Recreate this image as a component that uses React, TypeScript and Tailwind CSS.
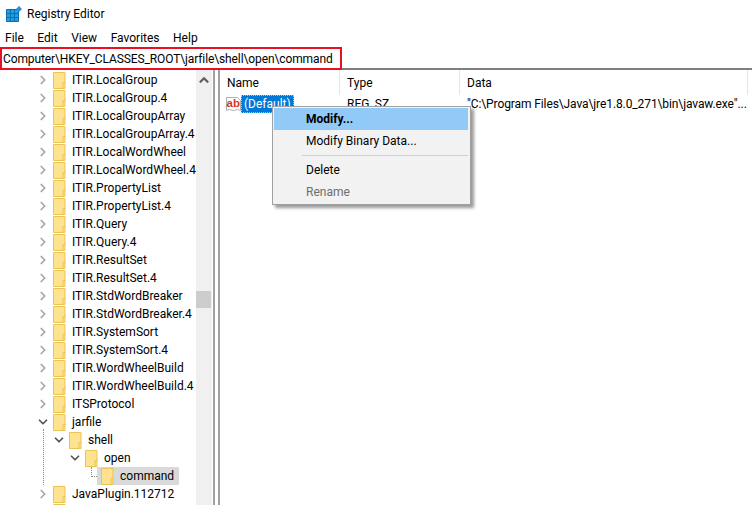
import { ChevronRight, ChevronDown, ChevronUp } from "lucide-react"

const menuItems = ["File", "Edit", "View", "Favorites", "Help"]

const treeKeys = [
  "ITIR.LocalGroup",
  "ITIR.LocalGroup.4",
  "ITIR.LocalGroupArray",
  "ITIR.LocalGroupArray.4",
  "ITIR.LocalWordWheel",
  "ITIR.LocalWordWheel.4",
  "ITIR.PropertyList",
  "ITIR.PropertyList.4",
  "ITIR.Query",
  "ITIR.Query.4",
  "ITIR.ResultSet",
  "ITIR.ResultSet.4",
  "ITIR.StdWordBreaker",
  "ITIR.StdWordBreaker.4",
  "ITIR.SystemSort",
  "ITIR.SystemSort.4",
  "ITIR.WordWheelBuild",
  "ITIR.WordWheelBuild.4",
  "ITSProtocol",
]

function RegeditIcon() {
  return (
    <svg width="16" height="16" viewBox="0 0 16 16" className="shrink-0">
      <path d="M.5 3.5h12v12H.5z" fill="#1f9fe2" stroke="#0b6fb0" />
      <path d="M4.5 3.5v12M8.5 3.5v12M.5 7.5h12M.5 11.5h12" stroke="#0b6fb0" strokeWidth="1" />
      <path d="M13 0l3 3-3 3-3-3z" fill="#2a8fd0" />
    </svg>
  )
}

function Folder() {
  return (
    <svg width="13" height="18" viewBox="0 0 13 18" className="shrink-0">
      <path d="M.5 1.5h11.5v16H.5z" fill="#fde28f" stroke="#eac455" />
      <path d="M10 17.5v-6h2.5" fill="none" stroke="#eac455" />
    </svg>
  )
}

function ValueIcon() {
  return (
    <svg width="15" height="17" viewBox="0 0 15 17" className="shrink-0">
      <path d="M.5 1.5h11l3 3v10l-3-1-4 1-4-1-3 1z" fill="#fff" stroke="#b0b0b0" />
      <text x="0.5" y="11" fontSize="11.5" fontWeight="700" fill="#d0391c" fontFamily="'Liberation Sans', sans-serif">
        ab
      </text>
    </svg>
  )
}

function TreeRow({ name }: { name: string }) {
  return (
    <div className="flex h-[18px] items-center">
      <ChevronRight size={14} strokeWidth={3} className="ml-[36px] shrink-0 text-[#a6a6a6]" />
      <span className="ml-[3px]">
        <Folder />
      </span>
      <span className="ml-[6px] whitespace-nowrap">{name}</span>
    </div>
  )
}

export default function App() {
  return (
    <div className="relative h-[505px] w-[752px] overflow-hidden bg-white font-['Roboto',sans-serif] text-[12px] text-black">
      <div className="flex h-[28px] items-center gap-[5px] pl-[6px]">
        <RegeditIcon />
        <span>Registry Editor</span>
      </div>

      <div className="flex h-[19px] items-center gap-[13.5px] pl-[5px]">
        {menuItems.map((item) => (
          <span key={item}>{item}</span>
        ))}
      </div>

      <div className="flex h-[23px] items-stretch border-b-2 border-[#7f7f7f]">
        <div className="flex h-[23px] w-[342px] items-center border-2 border-[#e81123] pl-[1px]">
          <span className="whitespace-nowrap tracking-[-0.11px]">Computer\HKEY_CLASSES_ROOT\jarfile\shell\open\command</span>
        </div>
      </div>

      <div className="flex h-[435px]">
        <div className="flex w-[196px] shrink-0 flex-col overflow-hidden pt-[1px]">
          {treeKeys.map((key) => (
            <TreeRow key={key} name={key} />
          ))}

          <div className="relative flex h-[18px] items-center">
            <ChevronDown size={14} strokeWidth={3} className="ml-[36px] shrink-0 text-[#555]" />
            <span className="ml-[3px]">
              <Folder />
            </span>
            <span className="ml-[6px]">jarfile</span>
            <div className="absolute left-[43px] top-[16px] h-[56px] border-l border-dotted border-[#888]" />
          </div>
          <div className="flex h-[18px] items-center">
            <ChevronDown size={14} strokeWidth={3} className="ml-[52px] shrink-0 text-[#555]" />
            <span className="ml-[3px]">
              <Folder />
            </span>
            <span className="ml-[6px]">shell</span>
          </div>
          <div className="flex h-[18px] items-center">
            <ChevronDown size={14} strokeWidth={3} className="ml-[68px] shrink-0 text-[#555]" />
            <span className="ml-[3px]">
              <Folder />
            </span>
            <span className="ml-[6px]">open</span>
          </div>
          <div className="relative flex h-[18px] items-center">
            <div className="absolute left-[91px] top-0 h-[10px] w-[6px] border-b border-l border-dotted border-[#888]" />
            <div className="ml-[97px] flex h-[18px] w-[82px] items-center bg-[#d9d9d9] pl-[4px]">
              <Folder />
              <span className="ml-[6px]">command</span>
            </div>
          </div>
          <TreeRow name="JavaPlugin.112712" />
          <div className="ml-[53px] flex h-[18px] items-center">
            <Folder />
          </div>
        </div>

        <div className="flex w-[16px] shrink-0 flex-col bg-[#f0f0f0]">
          <div className="flex h-[20px] items-center justify-center">
            <ChevronUp size={14} strokeWidth={4} className="text-[#606060]" />
          </div>
          <div className="mt-[201px] h-[17px] w-[15px] bg-[#cdcdcd]" />
        </div>

        <div className="ml-[1px] w-[2px] shrink-0 bg-[#a0a0a0]" />
        <div className="ml-[3px] w-[2px] shrink-0 bg-[#a0a0a0]" />

        <div className="flex-1 pl-[1px]">
          <div className="flex h-[25px]">
            <div className="flex w-[119px] items-center border-r border-[#e5e5e5] pl-[6px]">Name</div>
            <div className="flex w-[120px] items-center border-r border-[#e5e5e5] pl-[7px]">Type</div>
            <div className="flex w-[288px] items-center border-r border-[#e5e5e5] pl-[7px]">Data</div>
          </div>
          <div className="flex h-[18px] items-center">
            <div className="ml-[5px] flex w-[114px] items-center">
              <ValueIcon />
              <span className="flex h-[18px] items-center border border-dotted border-[#9cc9ee] bg-[#0078d7] px-[2px] text-white">
                (Default)
              </span>
            </div>
            <span className="ml-[7px] w-[113px]">REG_SZ</span>
            <span className="ml-[7px] whitespace-nowrap tracking-[-0.1px]">"C:\Program Files\Java\jre1.8.0_271\bin\javaw.exe"...</span>
          </div>
        </div>
      </div>

      <div className="absolute left-[272px] top-[106px] w-[199px] border border-[#a0a0a0] bg-[#f2f2f2] py-[1px] pl-[1px] pr-[2px] shadow-[3px_3px_3px_rgba(0,0,0,0.4)]">
        <div className="flex h-[22px] items-center bg-[#91c9f7] pl-[32px] font-bold">Modify...</div>
        <div className="flex h-[22px] items-center pl-[32px]">Modify Binary Data...</div>
        <div className="my-[3px] ml-[28px] h-px bg-[#d0d0d0]" />
        <div className="flex h-[22px] items-center pl-[32px]">Delete</div>
        <div className="flex h-[22px] items-center pl-[32px] text-[#6d6d6d]">Rename</div>
      </div>
    </div>
  )
}
